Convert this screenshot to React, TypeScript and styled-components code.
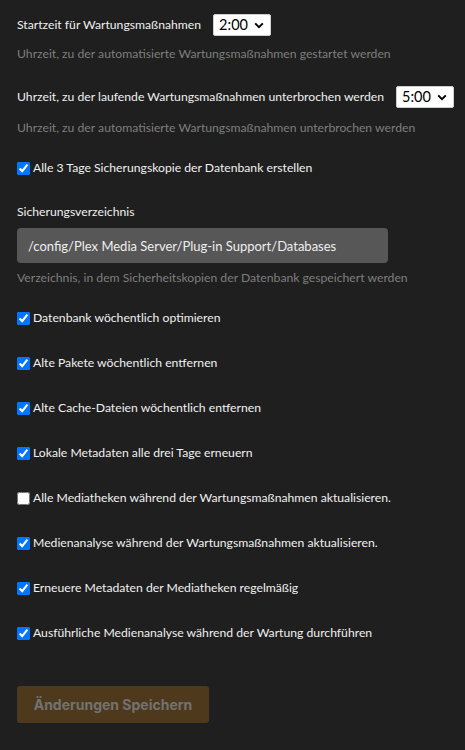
import React, { useState } from "react";
import styled, { createGlobalStyle } from "styled-components";

const Global = createGlobalStyle`
  html, body {
    margin: 0;
    padding: 0;
    background: #1f1f1f;
  }
  body {
    font-family: "Lato", "Open Sans", sans-serif;
    color: #eeeeee;
  }
`;

const Page = styled.div`
  box-sizing: border-box;
  width: 465px;
  min-height: 750px;
  padding: 14px 17px 0 17px;
  display: flex;
  flex-direction: column;
  white-space: nowrap;
`;

const Row = styled.div<{ $top?: number }>`
  display: flex;
  align-items: center;
  gap: 12px;
  margin-top: ${(p) => p.$top ?? 0}px;
`;

const Label = styled.label<{ $top?: number }>`
  font-size: 12.2px;
  line-height: 18px;
  color: #f0f0f0;
  margin-top: ${(p) => p.$top ?? 0}px;
`;

const Help = styled.div<{ $top?: number }>`
  font-size: 12.2px;
  line-height: 18px;
  color: #7e7e7e;
  margin-top: ${(p) => p.$top ?? 0}px;
`;

const SelectWrap = styled.div`
  position: relative;
  flex-shrink: 0;
  width: 58px;
  height: 22px;
`;

const Select = styled.select`
  appearance: none;
  -webkit-appearance: none;
  box-sizing: border-box;
  width: 100%;
  height: 100%;
  margin: 0;
  padding: 0 0 0 5px;
  border: 1px solid #cfcfcf;
  border-radius: 2px;
  background: #ffffff;
  color: #000000;
  font-family: "Lato", "Open Sans", sans-serif;
  font-size: 14.5px;
  line-height: 20px;
  outline: none;
`;

const Chevron = styled.svg`
  position: absolute;
  right: 7px;
  top: 8px;
  width: 10px;
  height: 7px;
  pointer-events: none;
`;

const CheckRow = styled.label<{ $top?: number }>`
  display: flex;
  align-items: center;
  gap: 3px;
  font-size: 12.2px;
  line-height: 18px;
  color: #f0f0f0;
  margin-top: ${(p) => p.$top ?? 0}px;
`;

const Box = styled.input`
  flex-shrink: 0;
  width: 13px;
  height: 13px;
  margin: 0;
  accent-color: #0075ff;
`;

const PathInput = styled.input`
  box-sizing: border-box;
  width: 371px;
  height: 35px;
  margin-top: 7px;
  padding: 0 11px;
  border: none;
  border-radius: 4px;
  background: #575757;
  color: #eeeeee;
  font-family: "Lato", "Open Sans", sans-serif;
  font-size: 13px;
  outline: none;
`;

const SaveButton = styled.button`
  align-self: flex-start;
  margin-top: 44px;
  width: 192px;
  height: 37px;
  padding: 0;
  border: none;
  border-radius: 3px;
  background: #4e391d;
  color: #727272;
  font-family: "Inter", "Open Sans", sans-serif;
  font-weight: 700;
  font-size: 14px;
  white-space: nowrap;
  cursor: default;
`;

function TimeSelect({ value }: { value: string }) {
  const [v, setV] = useState(value);
  const hours = Array.from({ length: 24 }, (_, i) => `${i}:00`);
  return (
    <SelectWrap>
      <Select value={v} onChange={(e) => setV(e.target.value)}>
        {hours.map((h) => (
          <option key={h} value={h}>
            {h}
          </option>
        ))}
      </Select>
      <Chevron viewBox="0 0 10 7">
        <path d="M1.2 1.4 L5 5.2 L8.8 1.4" fill="none" stroke="#000" strokeWidth="2" />
      </Chevron>
    </SelectWrap>
  );
}

const options: { text: string; checked: boolean }[] = [
  { text: "Datenbank wöchentlich optimieren", checked: true },
  { text: "Alte Pakete wöchentlich entfernen", checked: true },
  { text: "Alte Cache-Dateien wöchentlich entfernen", checked: true },
  { text: "Lokale Metadaten alle drei Tage erneuern", checked: true },
  { text: "Alle Mediatheken während der Wartungsmaßnahmen aktualisieren.", checked: false },
  { text: "Medienanalyse während der Wartungsmaßnahmen aktualisieren.", checked: true },
  { text: "Erneuere Metadaten der Mediatheken regelmäßig", checked: true },
  { text: "Ausführliche Medienanalyse während der Wartung durchführen", checked: true },
];

export default function App() {
  return (
    <>
      <Global />
      <Page>
        <Row>
          <Label>Startzeit für Wartungsmaßnahmen</Label>
          <TimeSelect value="2:00" />
        </Row>
        <Help $top={9}>Uhrzeit, zu der automatisierte Wartungsmaßnahmen gestartet werden</Help>

        <Row $top={23}>
          <Label>Uhrzeit, zu der laufende Wartungsmaßnahmen unterbrochen werden</Label>
          <TimeSelect value="5:00" />
        </Row>
        <Help $top={11}>Uhrzeit, zu der automatisierte Wartungsmaßnahmen unterbrochen werden</Help>

        <CheckRow $top={22}>
          <Box type="checkbox" defaultChecked />
          Alle 3 Tage Sicherungskopie der Datenbank erstellen
        </CheckRow>

        <Label $top={26}>Sicherungsverzeichnis</Label>
        <PathInput defaultValue="/config/Plex Media Server/Plug-in Support/Databases" />
        <Help $top={6}>Verzeichnis, in dem Sicherheitskopien der Datenbank gespeichert werden</Help>

        {options.map((o, i) => (
          <CheckRow key={o.text} $top={i === 0 ? 22 : 27}>
            <Box type="checkbox" defaultChecked={o.checked} />
            {o.text}
          </CheckRow>
        ))}

        <SaveButton disabled>Änderungen Speichern</SaveButton>
      </Page>
    </>
  );
}
